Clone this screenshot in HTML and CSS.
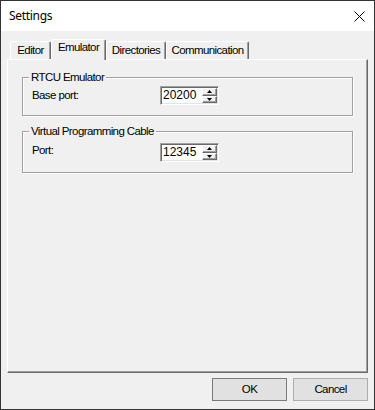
FILE: index.html
```html
<!DOCTYPE html>
<html>
<head>
<meta charset="utf-8">
<title>Settings</title>
<link rel="stylesheet" href="styles.css">
</head>
<body>
<div class="window">
  <div class="titlebar">
    <span class="title">Settings</span>
    <svg class="close" width="11" height="11" viewBox="0 0 11 11"><path d="M0.5 0.5 L10.5 10.5 M10.5 0.5 L0.5 10.5" stroke="#000" stroke-width="1" fill="none"/></svg>
  </div>
  <div class="content">
    <div class="tabs">
      <div class="tab tab-editor">Editor</div>
      <div class="tab tab-emulator selected">Emulator</div>
      <div class="tab tab-directories">Directories</div>
      <div class="tab tab-communication">Communication</div>
    </div>
    <div class="panel">
      <div class="group group-emulator">
        <div class="group-title">RTCU Emulator</div>
        <div class="row">
          <span class="label label-base">Base port:</span>
          <div class="spin-input">
            <span class="value">20200</span>
            <div class="spinner">
              <div class="spin-btn"><svg width="5" height="3" viewBox="0 0 5 3"><path d="M2.5 0 L5 3 L0 3 Z" fill="#000"/></svg></div>
              <div class="spin-btn"><svg width="5" height="3" viewBox="0 0 5 3"><path d="M0 0 L5 0 L2.5 3 Z" fill="#000"/></svg></div>
            </div>
          </div>
        </div>
      </div>
      <div class="group group-cable">
        <div class="group-title">Virtual Programming Cable</div>
        <div class="row">
          <span class="label label-port">Port:</span>
          <div class="spin-input">
            <span class="value">12345</span>
            <div class="spinner">
              <div class="spin-btn"><svg width="5" height="3" viewBox="0 0 5 3"><path d="M2.5 0 L5 3 L0 3 Z" fill="#000"/></svg></div>
              <div class="spin-btn"><svg width="5" height="3" viewBox="0 0 5 3"><path d="M0 0 L5 0 L2.5 3 Z" fill="#000"/></svg></div>
            </div>
          </div>
        </div>
      </div>
    </div>
    <div class="buttons">
      <div class="btn btn-default">OK</div>
      <div class="btn">Cancel</div>
    </div>
  </div>
</div>
</body>
</html>
```

FILE: styles.css
```css
html, body {
  margin: 0;
  padding: 0;
  background: #f0f0f0;
}

.window {
  width: 375px;
  height: 410px;
  box-sizing: border-box;
  border: 1px solid #333333;
  background: #f0f0f0;
  font-family: "Liberation Sans", Arial, sans-serif;
  font-size: 11.5px;
  letter-spacing: -0.6px;
  color: #000;
}

.titlebar {
  height: 30px;
  background: #ffffff;
  display: flex;
  align-items: center;
  justify-content: space-between;
  padding: 0 9px 0 8px;
}

.title {
  font-family: "Noto Sans", "Liberation Sans", sans-serif;
  font-size: 12px;
  letter-spacing: -0.3px;
  line-height: 16px;
}

.close {
  display: block;
}

.content {
  padding: 8px 6px 0 6px;
}

.tabs {
  display: flex;
  align-items: flex-end;
  height: 20px;
  padding-left: 3px;
}

.tab {
  box-sizing: border-box;
  height: 18px;
  border-top: 1px solid #ffffff;
  border-left: 1px solid #ffffff;
  border-right: 1px solid #696969;
  border-radius: 2px 2px 0 0;
  box-shadow: inset -1px 0 0 #a0a0a0;
  background: #f0f0f0;
  text-align: center;
  line-height: 16px;
  white-space: nowrap;
}

.tab-editor { width: 41px; }
.tab-emulator { width: 55px; }
.tab-directories { width: 60px; }
.tab-communication { width: 83px; }

.tab.selected {
  height: 21px;
  margin-bottom: -1px;
  line-height: 14px;
}

.panel {
  box-sizing: border-box;
  height: 314px;
  border-top: 1px solid #ffffff;
  border-left: 1px solid #ffffff;
  border-right: 1px solid #696969;
  border-bottom: 1px solid #696969;
  box-shadow: inset -1px -1px 0 #a0a0a0;
  padding: 17px 14px 0 14px;
}

.group {
  border: 1px solid #a0a0a0;
  box-shadow: 1px 1px 0 #ffffff, inset 1px 1px 0 #ffffff;
}

.group-emulator {
  padding-bottom: 10px;
}

.group-cable {
  margin-top: 15px;
  padding-bottom: 10px;
}

.group-title {
  width: fit-content;
  height: 13px;
  line-height: 13px;
  margin: -7px 0 0 6px;
  padding: 0 2px;
  background: #f0f0f0;
  white-space: nowrap;
}

.row {
  display: flex;
  align-items: flex-start;
  padding-left: 9px;
}

.group-emulator .row { margin-top: 2px; }
.group-cable .row { margin-top: 5px; }

.label {
  width: 128px;
  line-height: 13px;
}

.label-base { margin-top: 3px; }
.label-port { margin-top: 1px; }

.spin-input {
  box-sizing: border-box;
  width: 59px;
  height: 19px;
  display: flex;
  align-items: center;
  justify-content: space-between;
  background: #ffffff;
  border-top: 1px solid #a0a0a0;
  border-left: 1px solid #a0a0a0;
  border-right: 1px solid #ffffff;
  border-bottom: 1px solid #ffffff;
  box-shadow: inset 1px 1px 0 #696969, inset -1px -1px 0 #e3e3e3;
  padding: 1px 1px 1px 2px;
}

.value {
  font-size: 12px;
  letter-spacing: 0;
  line-height: 15px;
}

.spinner {
  display: flex;
  flex-direction: column;
  width: 15px;
  height: 15px;
}

.spin-btn {
  box-sizing: border-box;
  flex: 1;
  display: flex;
  align-items: center;
  justify-content: center;
  background: #f0f0f0;
  border-top: 1px solid #ffffff;
  border-left: 1px solid #ffffff;
  border-right: 1px solid #696969;
  border-bottom: 1px solid #696969;
  box-shadow: inset -1px -1px 0 #a0a0a0;
}

.spin-btn svg {
  display: block;
}

.buttons {
  display: flex;
  justify-content: flex-end;
  gap: 6px;
  margin-top: 5px;
}

.btn {
  box-sizing: border-box;
  width: 75px;
  height: 23px;
  border: 1px solid #adadad;
  background: #e1e1e1;
  text-align: center;
  line-height: 21px;
}

.btn-default {
  border-color: #7a7a7a;
}
```
